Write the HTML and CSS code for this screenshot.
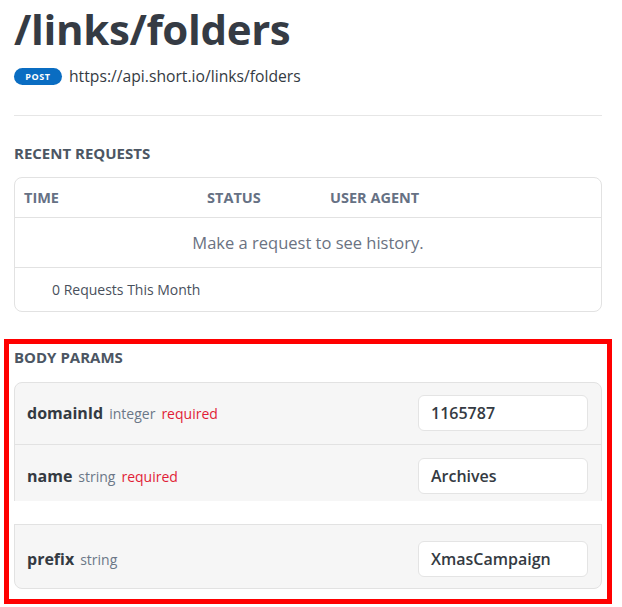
FILE: index.html
```html
<!DOCTYPE html>
<html lang="en">
<head>
<meta charset="utf-8">
<title>/links/folders</title>
<link rel="stylesheet" href="styles.css">
</head>
<body>
<main class="page">
  <h1 class="title">/links/folders</h1>
  <div class="endpoint">
    <span class="method">POST</span>
    <span class="url">https://api.short.io/links/folders</span>
  </div>
  <hr class="divider">

  <section class="recent">
    <h2 class="section-label">RECENT REQUESTS</h2>
    <div class="table">
      <div class="table-head">
        <span>TIME</span>
        <span>STATUS</span>
        <span>USER AGENT</span>
      </div>
      <div class="table-empty">Make a request to see history.</div>
      <div class="table-foot">0 Requests This Month</div>
    </div>
  </section>

  <section class="body-params">
    <h2 class="section-label">BODY PARAMS</h2>
    <div class="params">
      <div class="param param-first">
        <div class="param-label">
          <span class="param-name">domainId</span>
          <span class="param-type">integer</span>
          <span class="param-req">required</span>
        </div>
        <div class="param-input">1165787</div>
      </div>
      <div class="param param-second">
        <div class="param-label">
          <span class="param-name">name</span>
          <span class="param-type">string</span>
          <span class="param-req">required</span>
        </div>
        <div class="param-input">Archives</div>
      </div>
      <div class="param-gap"></div>
      <div class="param param-third">
        <div class="param-label">
          <span class="param-name">prefix</span>
          <span class="param-type">string</span>
        </div>
        <div class="param-input">XmasCampaign</div>
      </div>
    </div>
  </section>
</main>
</body>
</html>
```

FILE: styles.css
```css
* { box-sizing: border-box; }

html, body {
  margin: 0;
  background: #ffffff;
}

body {
  font-family: "Open Sans", "DejaVu Sans", sans-serif;
  color: #343a42;
}

.page {
  padding: 1px 20px 20px 14px;
}

.title {
  margin: 0;
  font-size: 42px;
  line-height: 56px;
  font-weight: 700;
  color: #353b44;
  letter-spacing: -0.35px;
}

.endpoint {
  display: flex;
  align-items: center;
  gap: 7px;
  height: 24px;
  margin-top: 7px;
}

.method {
  display: inline-flex;
  align-items: center;
  justify-content: center;
  width: 48px;
  height: 17px;
  border-radius: 9px;
  background: #0a6dc2;
  color: #ffffff;
  font-size: 9px;
  font-weight: 700;
  letter-spacing: 0.6px;
}

.url {
  font-size: 15.7px;
  color: #343a42;
}

.divider {
  margin: 27px 0 0;
  border: 0;
  border-top: 1px solid #e6e6e6;
}

.section-label {
  margin: 0;
  font-size: 15px;
  line-height: 16px;
  font-weight: 700;
  color: #4c5663;
}

.recent {
  margin-top: 29px;
}

.table {
  margin-top: 16px;
  border: 1px solid #e2e2e2;
  border-radius: 8px;
}

.table-head {
  display: grid;
  grid-template-columns: 183px 123px 1fr;
  align-items: center;
  height: 40px;
  padding-left: 9px;
  border-bottom: 1px solid #e2e2e2;
  font-size: 14.5px;
  font-weight: 700;
  color: #667184;
}

.table-empty {
  height: 50px;
  display: flex;
  align-items: center;
  justify-content: center;
  border-bottom: 1px solid #e2e2e2;
  font-size: 16.5px;
  color: #6a7282;
}

.table-foot {
  height: 43px;
  display: flex;
  align-items: center;
  padding-left: 37px;
  font-size: 14px;
  color: #49505c;
}

.body-params {
  margin-top: 37px;
  padding-bottom: 5px;
  outline: 5px solid #ff0000;
  outline-offset: 5px;
}

.params {
  margin-top: 17px;
  border: 1px solid #e2e2e2;
  border-radius: 8px;
  background: #f6f6f6;
}

.param {
  display: flex;
  align-items: center;
  justify-content: space-between;
  padding: 0 13px 0 12px;
}

.param-first {
  padding-top: 12px;
  padding-bottom: 13px;
  border-bottom: 1px solid #e2e2e2;
}

.param-second {
  padding-top: 13px;
  padding-bottom: 7px;
}

.param-gap {
  height: 23px;
  margin: 0 -2px;
  background: #ffffff;
}

.param-third {
  padding-top: 16px;
  padding-bottom: 11px;
  border-top: 1px solid #e2e2e2;
}

.param-label {
  display: flex;
  align-items: baseline;
  gap: 6px;
}

.param-name {
  font-size: 16px;
  font-weight: 700;
  color: #343a42;
}

.param-type {
  font-size: 14px;
  color: #6b7787;
}

.param-req {
  font-size: 14px;
  color: #e11d37;
}

.param-input {
  width: 170px;
  height: 36px;
  display: flex;
  align-items: center;
  padding-left: 12px;
  background: #ffffff;
  border: 1px solid #e4e4e4;
  border-radius: 6px;
  font-size: 16px;
  font-weight: 600;
  color: #343a42;
}
```
